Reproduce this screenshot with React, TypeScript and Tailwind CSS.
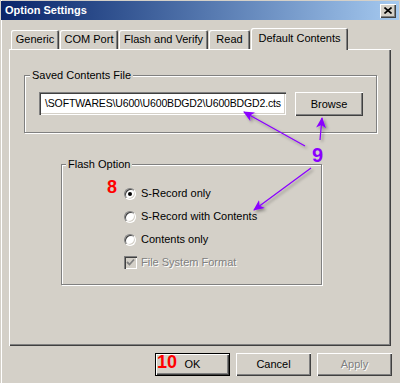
const raised =
  "shadow-[inset_1px_1px_0_#fff,inset_-1px_-1px_0_#404040,inset_-2px_-2px_0_#808080]";
const sunken =
  "shadow-[inset_1px_1px_0_#808080,inset_2px_2px_0_#404040,inset_-1px_-1px_0_#fff,inset_-2px_-2px_0_#d4d0c8]";

const tabs = [
  { label: "Generic", w: "w-[48px]" },
  { label: "COM Port", w: "w-[58px]" },
  { label: "Flash and Verify", w: "w-[89px]" },
  { label: "Read", w: "w-[41px]" },
];

const Radio = ({ checked, label }: { checked?: boolean; label: string }) => (
  <div className="h-[23px] flex items-center pl-[62px] gap-[5px]">
    <span className="relative w-[12px] h-[12px] rounded-full bg-white border border-t-[#808080] border-l-[#808080] border-r-white border-b-white shadow-[inset_1px_1px_0_#404040,inset_-1px_-1px_0_#d4d0c8] flex items-center justify-center">
      {checked && <span className="w-[4px] h-[4px] rounded-full bg-black" />}
    </span>
    <span>{label}</span>
  </div>
);

const Button = ({
  children,
  isDefault,
  disabled,
}: {
  children: React.ReactNode;
  isDefault?: boolean;
  disabled?: boolean;
}) => (
  <div
    className={
      "w-[75px] h-[23px] " + (isDefault ? "border border-black" : "")
    }
  >
    <div
      className={
        "w-full h-full flex items-center justify-center bg-[#d4d0c8] " +
        raised +
        (disabled ? " text-[#808080] [text-shadow:1px_1px_0_#fff]" : "")
      }
    >
      {children}
    </div>
  </div>
);

export default function App() {
  return (
    <div className="relative w-[400px] h-[383px] overflow-hidden bg-[#d4d0c8] font-['Liberation_Sans',Arial,sans-serif] text-[11px] text-black shadow-[inset_1px_0_0_#d4d0c8,inset_2px_0_0_#fff]">
      {/* title bar */}
      <div className="mx-[1px] mt-[1px] h-[19px] bg-linear-to-r from-[#0a246a] to-[#a6caf0] flex items-center justify-between pl-[4px] pr-[3px]">
        <span className="text-white font-bold text-[11px]">Option Settings</span>
        <div className={"w-[16px] h-[14px] bg-[#d4d0c8] flex items-center justify-center " + raised}>
          <svg width="8" height="7" viewBox="0 0 8 7">
            <path d="M0.5 0.5 L7.5 6.5 M7.5 0.5 L0.5 6.5" stroke="#000" strokeWidth="1.6" />
          </svg>
        </div>
      </div>

      {/* tabs */}
      <div className="mt-[8px] pl-[11px] h-[21px] flex items-end">
        {tabs.map((t) => (
          <div
            key={t.label}
            className={
              t.w +
              " h-[19px] mr-[1px] flex items-center justify-center rounded-t-[2px] shadow-[inset_1px_1px_0_#fff,inset_-1px_0_0_#404040,inset_-2px_0_0_#808080]"
            }
          >
            {t.label}
          </div>
        ))}
        <div className="relative z-10 w-[97px] h-[22px] -mb-[1px] bg-[#d4d0c8] flex items-center justify-center pb-[2px] rounded-t-[2px] shadow-[inset_1px_1px_0_#fff,inset_-1px_0_0_#404040,inset_-2px_0_0_#808080]">
          Default Contents
        </div>
      </div>

      {/* panel */}
      <div
        className={
          "ml-[9px] w-[382px] h-[297px] flex flex-col " + raised
        }
      >
        <div className="relative shrink-0 mt-[26px] ml-[15px] w-[353px] h-[58px] border border-[#808080] shadow-[1px_1px_0_#fff,inset_1px_1px_0_#fff]">
          <span className="absolute left-[5px] -top-[8px] px-[2px] bg-[#d4d0c8] leading-[14px]">
            Saved Contents File
          </span>
          <div className="flex items-start pt-[16px] pl-[14px] gap-[9px]">
            <div className={"w-[247px] h-[23px] bg-white flex items-center pl-[6px] whitespace-nowrap overflow-hidden text-[10.5px] tracking-[-0.15px] " + sunken}>
              \SOFTWARES\U600\U600BDGD2\U600BDGD2.cts
            </div>
            <div className={"w-[68px] h-[24px] flex items-center justify-center " + raised}>
              Browse
            </div>
          </div>
        </div>

        <div className="relative shrink-0 mt-[31px] ml-[52px] w-[261px] h-[121px] border border-[#808080] shadow-[1px_1px_0_#fff,inset_1px_1px_0_#fff]">
          <span className="absolute left-[4px] -top-[8px] px-[2px] bg-[#d4d0c8] leading-[14px]">
            Flash Option
          </span>
          <div className="pt-[17px] flex flex-col">
            <Radio checked label="S-Record only" />
            <Radio label="S-Record with Contents" />
            <Radio label="Contents only" />
            <div className="h-[23px] flex items-center pl-[62px] gap-[4px]">
              <span className={"w-[13px] h-[13px] bg-[#d4d0c8] flex items-center justify-center " + sunken}>
                <svg width="9" height="9" viewBox="0 0 9 9">
                  <path d="M1 4 L3.5 6.5 L8 1.5" fill="none" stroke="#808080" strokeWidth="1.8" />
                </svg>
              </span>
              <span className="text-[#808080] [text-shadow:1px_1px_0_#fff]">File System Format</span>
            </div>
          </div>
        </div>
      </div>

      {/* buttons */}
      <div className="mt-[7px] pr-[8px] flex justify-end gap-[6px]">
        <Button isDefault>OK</Button>
        <Button>Cancel</Button>
        <Button disabled>Apply</Button>
      </div>

      {/* annotations */}
      <span className="absolute left-[107px] top-[178px] text-[18px] leading-none font-bold text-[#ff0000]">8</span>
      <span className="absolute left-[312px] top-[145px] text-[20px] leading-none font-bold text-[#8a00ff]">9</span>
      <span className="absolute left-[157px] top-[353px] text-[18px] leading-none font-bold text-[#ff0000]">10</span>
      <svg className="absolute inset-0 pointer-events-none" width="400" height="383">
        <defs>
          <marker id="ah" markerWidth="12" markerHeight="10" refX="10" refY="5" orient="auto" markerUnits="userSpaceOnUse">
            <path d="M0 0 L11 5 L0 10 L3 5 Z" fill="#8a00ff" />
          </marker>
          <filter id="sh" x="-20%" y="-20%" width="140%" height="140%">
            <feDropShadow dx="2" dy="2" stdDeviation="1.5" floodColor="#000" floodOpacity="0.35" />
          </filter>
        </defs>
        <g stroke="#8a00ff" strokeWidth="1.3" fill="none" filter="url(#sh)">
          <line x1="305" y1="146" x2="244" y2="112" markerEnd="url(#ah)" />
          <line x1="320" y1="140" x2="322" y2="118" markerEnd="url(#ah)" />
          <line x1="311" y1="168" x2="254" y2="210" markerEnd="url(#ah)" />
        </g>
      </svg>
    </div>
  );
}
